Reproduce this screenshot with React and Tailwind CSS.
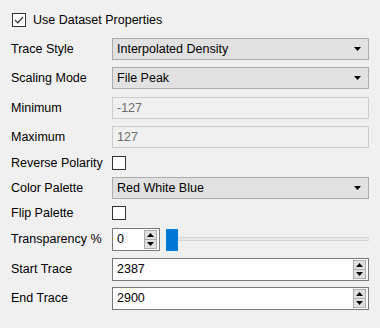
import React from 'react';

// 下拉箭头
function Arrow({ up = false }) {
  return (
    <svg width="7" height="4" viewBox="0 0 7 4" className="block">
      {up ? <polygon points="0,4 7,4 3.5,0" fill="#000" /> : <polygon points="0,0 7,0 3.5,4" fill="#000" />}
    </svg>
  );
}

function CheckBox({ checked }) {
  return (
    <div className="w-[14px] h-[14px] border border-[#333] bg-white flex items-center justify-center shrink-0">
      {checked && (
        <svg width="10" height="8" viewBox="0 0 10 8">
          <polyline points="1,4 3.8,6.8 9,1" fill="none" stroke="#333" strokeWidth="1.2" />
        </svg>
      )}
    </div>
  );
}

function Combo({ value }) {
  return (
    <div className="flex-1 h-full bg-[#e1e1e1] border border-[#adadad] flex items-center justify-between pl-[4px] pr-[7px]">
      <span>{value}</span>
      <Arrow />
    </div>
  );
}

function Disabled({ value }) {
  return (
    <div className="flex-1 h-full bg-[#f0f0f0] border border-[#cccccc] flex items-center pl-[4px] text-[#6d6d6d]">
      {value}
    </div>
  );
}

function SpinButtons() {
  return (
    <div className="flex flex-col w-[13px] h-[19px] mr-[2px]">
      <div className="flex-1 bg-[#e1e1e1] border border-[#adadad] flex items-center justify-center">
        <Arrow up />
      </div>
      <div className="flex-1 bg-[#e1e1e1] border border-[#adadad] border-t-0 flex items-center justify-center">
        <Arrow />
      </div>
    </div>
  );
}

function Spin({ value, className = 'flex-1' }) {
  return (
    <div className={`${className} h-full bg-white border border-[#7a7a7a] flex items-center justify-between pl-[4px]`}>
      <span>{value}</span>
      <SpinButtons />
    </div>
  );
}

function Row({ label, className, children }) {
  return (
    <div className={`flex items-center ${className}`}>
      <div className="w-[101px] shrink-0">{label}</div>
      {children}
    </div>
  );
}

export default function App() {
  return (
    <div
      className="w-[380px] h-[328px] bg-[#f0f0f0] text-black text-[12.5px] leading-none pl-[11px] pr-[11px] pt-[13px] flex flex-col"
      style={{ fontFamily: '"Liberation Sans", Arial, sans-serif' }}
    >
      <div className="flex items-center h-[14px] gap-[7px] pl-[1px]">
        <CheckBox checked />
        <span>Use Dataset Properties</span>
      </div>
      <Row label="Trace Style" className="h-[22px] mt-[11px]">
        <Combo value="Interpolated Density" />
      </Row>
      <Row label="Scaling Mode" className="h-[22px] mt-[7px]">
        <Combo value="File Peak" />
      </Row>
      <Row label="Minimum" className="h-[22px] mt-[8px]">
        <Disabled value="-127" />
      </Row>
      <Row label="Maximum" className="h-[22px] mt-[7px]">
        <Disabled value="127" />
      </Row>
      <Row label="Reverse Polarity" className="h-[14px] mt-[8px]">
        <CheckBox />
      </Row>
      <Row label="Color Palette" className="h-[22px] mt-[7px]">
        <Combo value="Red White Blue" />
      </Row>
      <Row label="Flip Palette" className="h-[14px] mt-[7px]">
        <CheckBox />
      </Row>
      <Row label="Transparency %" className="h-[23px] mt-[8px]">
        <Spin value="0" className="w-[48px]" />
        <div className="flex-1 h-full flex items-center ml-[6px] relative">
          <div className="absolute left-[2px] right-0 top-[9px] h-[4px] bg-[#e7eaea] border border-[#d6d6d6]" />
          <div className="relative w-[12px] h-[22px] bg-[#0078d7]" />
        </div>
      </Row>
      <Row label="Start Trace" className="h-[23px] mt-[7px]">
        <Spin value="2387" />
      </Row>
      <Row label="End Trace" className="h-[23px] mt-[6px]">
        <Spin value="2900" />
      </Row>
    </div>
  );
}
